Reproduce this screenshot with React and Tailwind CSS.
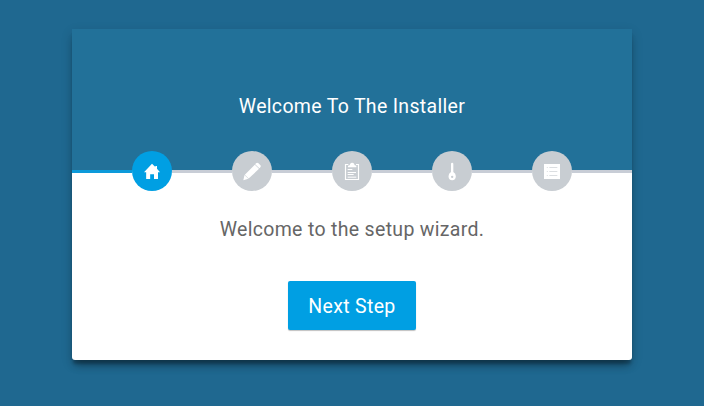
import { Fragment } from "react";

const icons = {
  home: (
    <path
      fill="#fff"
      d="M90 68 L100 78 V75 H105 V83.500 L114 93.500 H108 V114 H96 V99.500 H84.500 V114 H72.500 V93.500 H66 Z"
    />
  ),
  pencil: (
    <g fill="#fff">
      <path d="M102 67 Q105.500 63.500 109.500 67 L115 72.500 Q118 76 114.500 79.500 L112 82 L99.500 69.500 Z" />
      <path d="M98.500 71 L111 83.500 L80 112.500 L68.500 101 Z" />
      <path d="M67.500 102 L79 113.500 L64 117.500 Z" />
    </g>
  ),
  clipboard: (
    <g fill="none" stroke="#fff">
      <path strokeWidth="3.500" d="M79 70.500 H70.500 V115.500 H109.500 V70.500 H102" />
      <path
        fill="#fff"
        stroke="none"
        d="M78 79 V74 Q84 73.500 85 68 Q86 65 90.500 65 Q95 65 96 68 Q97 73.500 103 74 V79 Z"
      />
      <path strokeWidth="3" d="M77 85.500 H91 M77 94.500 H102 M77 100.500 H95 M77 108.500 H103" />
    </g>
  ),
  key: (
    <path
      fill="#fff"
      fillRule="evenodd"
      d="M87 69 Q87 65 90.500 65 Q94 65 94 69 V93 Q101.500 97 101.500 105.500 Q101 117.500 90.500 117.500 Q80 117.500 79.500 105.500 Q79.500 97 87 93 Z M90.500 104 A3.500 3.500 0 1 0 90.500 111 A3.500 3.500 0 1 0 90.500 104 Z"
    />
  ),
  list: (
    <g>
      <path fill="#fff" d="M66 69 H114 V114 H66 Z" />
      <path
        stroke="#c8cdd2"
        strokeWidth="2"
        d="M74.500 79.500 H77.500 M82 79.500 H106 M74.500 91.500 H77.500 M82 91.500 H106 M74.500 103.500 H77.500 M82 103.500 H106"
      />
    </g>
  ),
};

const steps = ["home", "pencil", "clipboard", "key", "list"];

function Step({ name, active }) {
  return (
    <li
      className={`h-10 w-10 shrink-0 rounded-full ${active ? "bg-[#009fe3]" : "bg-[#c8cdd2]"}`}
    >
      <svg className="h-10 w-10" viewBox="30 30 120 120" aria-hidden="true">
        {icons[name]}
      </svg>
    </li>
  );
}

export default function App() {
  return (
    <div className="h-[406px] w-[704px] overflow-hidden bg-[#1f6890] pt-[29px] font-['Roboto',sans-serif]">
      <main className="mx-auto flex h-[331px] w-[560px] flex-col items-center rounded-b-[3px] bg-white shadow-[0_8px_8px_-3px_rgba(0,0,0,0.28),0_5px_3px_-1px_rgba(0,0,0,0.22),0_4px_12px_rgba(0,0,0,0.16)]">
        <header className="h-[141px] w-full shrink-0 bg-[#227199] pt-[63px] text-center">
          <h1 className="text-[19.5px] leading-[30px] tracking-[0.32px] text-white">
            Welcome To The Installer
          </h1>
        </header>
        <ol className="-mt-[19px] flex w-full shrink-0">
          {steps.map((name, i) => (
            <Fragment key={name}>
              <li
                aria-hidden="true"
                className={`mt-[19px] h-[3px] flex-1 ${i === 0 ? "bg-[#0c9ada]" : "bg-[#c8cdd6]"}`}
              />
              <Step name={name} active={i === 0} />
            </Fragment>
          ))}
          <li aria-hidden="true" className="mt-[19px] h-[3px] flex-1 bg-[#c8cdd6]" />
        </ol>
        <p className="mt-6 text-[19.5px] leading-[30px] tracking-[0.32px] text-[#666]">
          Welcome to the setup wizard.
        </p>
        <button className="mt-9 h-[49px] w-32 shrink-0 rounded-[2px] bg-[#009fe3] pt-[2px] text-[19.5px] leading-[30px] tracking-[0.32px] text-white shadow-[0_1px_1px_rgba(0,0,0,0.25)]">
          Next Step
        </button>
      </main>
    </div>
  );
}
